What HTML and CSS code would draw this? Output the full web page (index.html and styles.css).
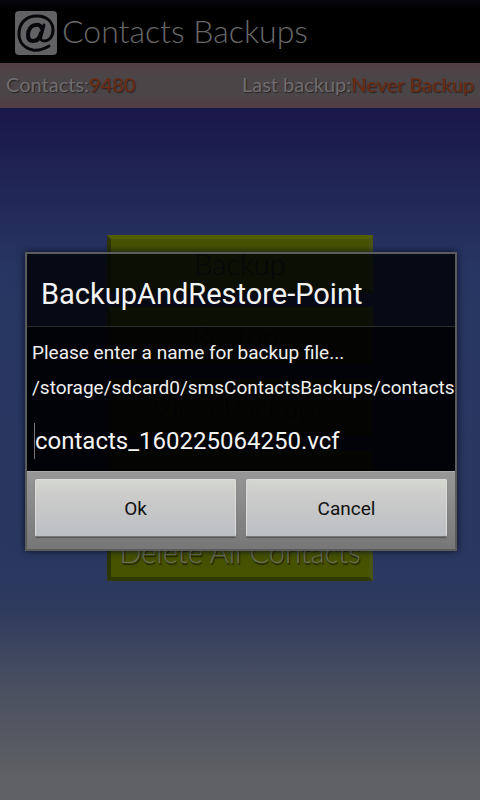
FILE: index.html
```html
<!DOCTYPE html>
<html lang="en">
<head>
  <meta charset="UTF-8" />
  <meta name="viewport" content="width=device-width" />
  <title>Contacts Backups</title>
  <link rel="stylesheet" href="styles.css">
</head>

<body>
  <header class="app-bar">
    <svg class="logo" viewBox="0 0 42 44" aria-hidden="true">
      <rect width="42" height="44" rx="4" fill="#626265" />
      <g fill="none" stroke="#08080c" stroke-linecap="round">
        <path d="M34 35C29 38 24 40 18 39C9 37 4 31 4 23C4 12 11 5 22 5C32 5 38 11 38 19C38 26 34 30 29 30C26 30 25 28 26 25L29 14" stroke-width="3" />
        <path d="M27 18C26 15 24 13 21 14C16 14 13 19 13 24C13 28 15 30 18 30C22 30 25 27 26 22" stroke-width="4" />
      </g>
    </svg>
    <h1>Contacts Backups</h1>
  </header>
  <div class="status">
    <p>Contacts:<span class="value">9480</span></p>
    <p>Last backup:<span class="value">Never Backup</span></p>
  </div>
  <main class="menu">
    <button type="button">Backup</button>
    <button type="button">Restore</button>
    <button type="button">View Backups</button>
    <button type="button">Send to Email</button>
    <button type="button" class="light">Delete All Contacts</button>
  </main>

  <div class="overlay">
    <form class="dialog" role="dialog" aria-labelledby="dialog-title">
      <h2 id="dialog-title">BackupAndRestore-Point</h2>
      <div class="dialog-body">
        <label for="filename">Please enter a name for backup file...
          <span class="path">/storage/sdcard0/smsContactsBackups/contacts</span>
        </label>
        <input type="text" id="filename" value="contacts_160225064250.vcf" />
      </div>
      <div class="actions">
        <button type="button">Ok</button>
        <button type="button">Cancel</button>
      </div>
    </form>
  </div>
</body>
</html>
```
FILE: styles.css
```css
* {
  box-sizing: border-box;
}
body {
  display: flex;
  flex-direction: column;
  min-height: 100vh;
  margin: 0;
  background: #1a174a;
  font-family: Roboto, "Liberation Sans", sans-serif;
}
h1,
h2,
p {
  margin: 0;
  font-weight: 400;
}
button,
input {
  font-family: inherit;
}

.app-bar {
  display: flex;
  align-items: center;
  gap: 5px;
  height: 63px;
  padding: 2px 15px 0;
  background: linear-gradient(#05050e, #000 10px);
}
.logo {
  width: 42px;
  height: 44px;
}
.app-bar h1 {
  padding-bottom: 4px;
  color: #68686a;
  font: 300 32px/40px Lato, sans-serif;
}

.status {
  display: flex;
  align-items: center;
  justify-content: space-between;
  height: 45px;
  padding: 0 6px 4px;
  background: linear-gradient(#523c43, #4c4548 12px, #4c4548 32px, #523c43);
  color: #6f6d6f;
  font: 300 20px/24px Lato, sans-serif;
  text-shadow: 1px 1px 1px #252325;
}
.value {
  color: #6b2c12;
  font-weight: 400;
}

.menu {
  flex: 1;
  display: flex;
  flex-direction: column;
  align-items: center;
  gap: 14px;
  padding: 127px 20px 20px;
  background: linear-gradient(#1a174a, #273562 23%, #2a3860 66%, #2e3a5e 72%, #4a5060 84%, #5f6064 97%);
}
.menu button {
  width: 266px;
  height: 58px;
  padding: 0;
  border: 4px solid;
  border-color: #505e00 #4a5412 #303900 #2d3500;
  background: #465200;
  color: #1c211c;
  font: 300 29px/40px Lato, sans-serif;
}
.menu .light {
  color: #6a6d5a;
  text-shadow: 1px 2px 1px #202500;
}

.overlay {
  position: absolute;
  inset: 0;
  display: flex;
  align-items: center;
  padding: 3px 23px 0 25px;
}
.dialog {
  width: 100%;
  border: 2px solid #5c5c5c;
  box-shadow: 0 0 7px #0b1027;
}
.dialog h2 {
  padding: 20px 14px 12px;
  border-bottom: 1px solid #2d2e2e;
  background: rgba(0, 1, 5, 0.82);
  color: #f4f4f4;
  font-size: 29px;
  line-height: 40px;
}
.dialog-body {
  padding: 8px 5px;
  background: rgba(0, 0, 2, 0.94);
}
.dialog-body label {
  display: block;
  color: #f0f0f0;
  font-size: 19px;
  line-height: 35px;
}
.path {
  display: block;
}
.dialog-body input {
  display: block;
  width: 100%;
  height: 36px;
  margin: 18px 0 4px 2px;
  padding: 0;
  border: 0;
  border-left: 1px solid #777;
  background: none;
  color: #f4f4f4;
  font-size: 24px;
}
.actions {
  display: flex;
  gap: 10px;
  padding: 7px 8px 12px;
  border-top: 1px solid #aaa;
  background: linear-gradient(#979797, #777);
}
.actions button {
  flex: 1;
  height: 58px;
  border: 1px solid #ddd;
  border-bottom-color: #777;
  border-radius: 2px;
  background: linear-gradient(#d4d6cf, #c9c9c9 40%, #bcbfc3);
  box-shadow: 0 1px 1px #555;
  color: #111;
  font-size: 19px;
}
```
